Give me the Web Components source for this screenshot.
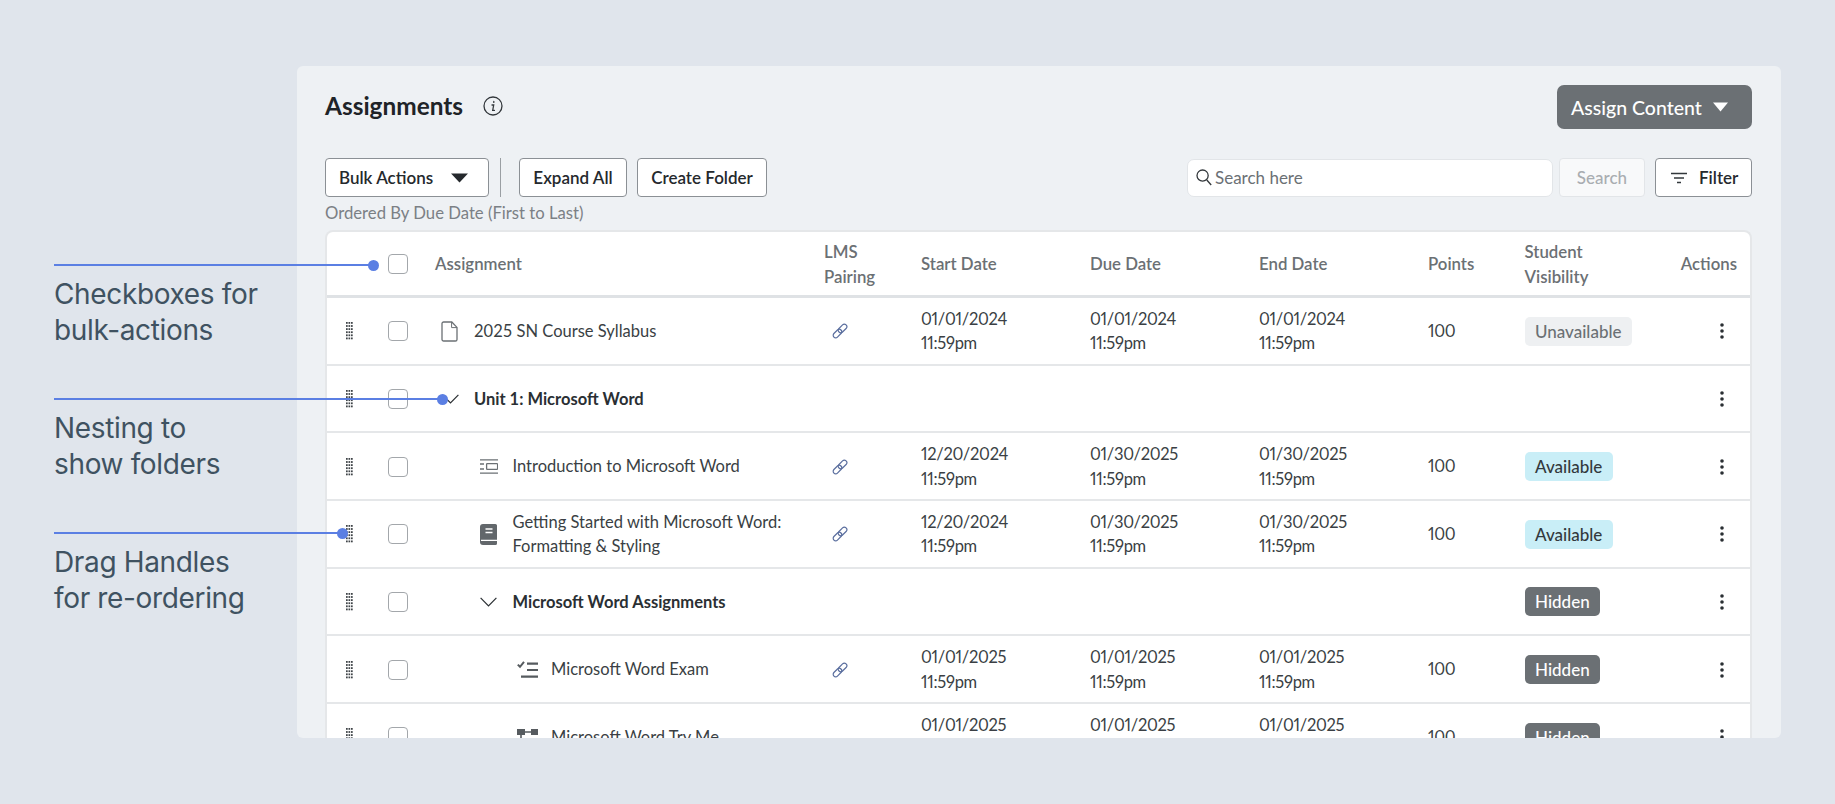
<!DOCTYPE html>
<html lang="en">
<head>
<meta charset="utf-8">
<title>Assignments</title>
<style>
html,body{margin:0;height:100%;background:#e0e5ec}
body{font-family:"Lato","Liberation Sans",sans-serif;overflow:hidden}
</style>
</head>
<body>
<assign-board></assign-board>
<script>
const COLS = '108px 389px 97px 169px 169px 169px 96.5px 1fr 90px';

const handleDots = () => {
  let out = '';
  for(let r=0;r<6;r++) for(let c=0;c<3;c++) out += `<rect x="${c*2.5}" y="${r*3.1}" width="1.7" height="1.8"/>`;
  return `<svg width="7" height="18" viewBox="0 0 7 18" fill="#3f4448">${out}</svg>`;
};

const ICONS = {
  doc:`<svg width="18" height="21" viewBox="0 0 18 21" fill="none" stroke="#6b7074" stroke-width="1.3"><path d="M2.6 1h8.2L16 6.4V18.4a1.6 1.6 0 0 1-1.6 1.6H2.6A1.6 1.6 0 0 1 1 18.4V2.6A1.6 1.6 0 0 1 2.6 1Z"/><path d="M10.6 1v5.6H16" stroke-width="1"/></svg>`,
  lesson:`<svg width="18" height="15" viewBox="0 0 18 15" fill="none" stroke="#6b7074" stroke-width="1.3"><path d="M0 .8h18M0 14.2h18M0 5h4M0 10h4"/><rect x="6.6" y="4.7" width="11" height="5.6" rx=".6"/></svg>`,
  book:`<svg width="18" height="21" viewBox="0 0 18 21"><path fill="#62676b" d="M3 0h12.4A1.6 1.6 0 0 1 17 1.6v17.8a1.6 1.6 0 0 1-1.6 1.6H3a3 3 0 0 1-3-3V3a3 3 0 0 1 3-3Z"/><path stroke="#fff" stroke-width="1.4" d="M5.5 5h7M5.5 8.5h7M1 16.4h16"/></svg>`,
  exam:`<svg width="21" height="17" viewBox="0 0 21 17" fill="none" stroke="#565b5f"><path stroke-width="2" d="M.8 3.6 3 5.8 7 .9"/><path stroke-width="2.2" d="M10 2.6h11M10 9h11M4 15.6h17"/></svg>`,
  tryme:`<svg width="21" height="17" viewBox="0 0 21 17" fill="#565b5f"><rect x="0" y="0" width="8" height="6"/><rect x="14" y="0" width="7" height="6"/><path stroke="#565b5f" stroke-width="1.6" fill="none" d="M8 3h6M4 6v8h5"/><rect x="9" y="11" width="8" height="6"/></svg>`,
  chevron:`<svg width="17" height="10" viewBox="0 0 17 10" fill="none" stroke="#2a2f33" stroke-width="1.2"><path d="M.6.8 8.5 9 16.4.8"/></svg>`,
  link:`<svg width="16" height="16" viewBox="0 0 16 16" fill="none" stroke="#5a6e9e" stroke-width="1.2"><g transform="rotate(-45 8 8)"><rect x="-.6" y="5.5" width="10" height="5" rx="2.5"/><rect x="6.6" y="5.5" width="10" height="5" rx="2.5"/></g></svg>`,
  kebab:`<svg width="4" height="16" viewBox="0 0 4 16" fill="#2a2f33"><circle cx="2" cy="2" r="1.8"/><circle cx="2" cy="8" r="1.8"/><circle cx="2" cy="14" r="1.8"/></svg>`,
  handle:handleDots()
};

class CalloutNote extends HTMLElement{
  constructor(){
    super();
    this.attachShadow({mode:'open'}).innerHTML = `
    <style>
    :host{display:block;position:relative;color:#3f5261;font:400 28px/36px "Inter","Noto Sans",sans-serif;letter-spacing:-.35px}
    .lead{position:absolute;left:0;top:-12px;height:2px;background:#5b7fe3;z-index:5}
    .lead::after{content:"";position:absolute;right:-5px;top:-4.5px;width:11px;height:11px;border-radius:50%;background:#5b7fe3}
    </style>
    <div class="lead" style="width:${this.getAttribute('reach')}px"></div><slot></slot>`;
  }
}

class UiButton extends HTMLElement{
  constructor(){
    super();
    this.attachShadow({mode:'open'}).innerHTML = `
    <style>
    :host{display:inline-flex;box-sizing:border-box;height:39px;align-items:center;justify-content:center;gap:10px;background:#fff;border:1px solid #8b9095;border-radius:4px;color:#25292d;font:600 17px "Lato",sans-serif;white-space:nowrap}
    :host([variant=primary]){height:44px;background:#6b7074;border:0;border-radius:7px;color:#fff;font-size:19.5px;font-weight:500;gap:11px;justify-content:flex-start;padding-left:14px}
    :host([variant=off]){background:#f8f9fa;border-color:#e2e5e8;color:#a9adb1;font-weight:500}
    </style>
    <slot></slot>`;
  }
}

class StatusTag extends HTMLElement{
  constructor(){
    super();
    this.attachShadow({mode:'open'}).innerHTML = `
    <style>
    :host{display:inline-flex;align-items:center;height:29px;padding:0 10.5px;border-radius:5px;font:500 17px "Lato",sans-serif;background:#eef0f2;color:#6b7074}
    :host([kind=available]){background:#c9eef7;color:#33393d}
    :host([kind=hidden]){background:#6b7074;color:#fff}
    </style>
    <slot></slot>`;
  }
}

class TableRow extends HTMLElement{
  constructor(){
    super();
    const level = +this.getAttribute('level') || 0;
    const icon = ICONS[this.getAttribute('icon')] || '';
    const folder = this.hasAttribute('folder');
    const dates = (this.getAttribute('dates') || '').split(',').filter(Boolean);
    const link = this.hasAttribute('link');
    const tag = this.getAttribute('tag');
    const tagLabel = tag ? tag[0].toUpperCase()+tag.slice(1) : '';
    this.attachShadow({mode:'open'}).innerHTML = `
    <style>
    :host{display:grid;grid-template-columns:${COLS};align-items:center;box-sizing:border-box;height:67.67px;padding-top:1px;border-bottom:2px solid #e5e7e9;color:#3a3f44;font:400 16.5px/24.5px "Lato",sans-serif}
    .tools{display:flex;align-items:center;padding-left:19px}
    .handle{display:flex;width:41.5px}
    .box{width:20px;height:20px;box-sizing:border-box;border:1.5px solid #a3a7ab;border-radius:4px;background:#fff}
    .name{display:flex;align-items:center;margin-left:${level*38.5}px}
    .glyph{display:flex;justify-content:center;align-items:center;width:30px;margin-right:9px}
    .folder{font-weight:700;color:#2a2f33}
    .lms{padding-left:8px;display:flex}
    .num{font-variant-numeric:proportional-nums;letter-spacing:-.3px}
    .end{display:flex;justify-content:flex-end;padding-right:26px}
    </style>
    <div class="tools"><span class="handle">${ICONS.handle}</span><span class="box"></span></div>
    <div class="name"><span class="glyph">${folder?ICONS.chevron:icon}</span><span class="${folder?'folder':''}"><slot></slot></span></div>
    <div class="lms">${link?ICONS.link:''}</div>
    ${[0,1,2].map(i=>`<div class="num">${dates[i]?dates[i].replace(' ','<br>'):''}</div>`).join('')}
    <div class="num">${dates.length?'100':''}</div>
    <div>${tag?`<status-tag kind="${tag}">${tagLabel}</status-tag>`:''}</div>
    <div class="end">${ICONS.kebab}</div>`;
  }
}

class TableHead extends HTMLElement{
  constructor(){
    super();
    this.attachShadow({mode:'open'}).innerHTML = `
    <style>
    :host{display:grid;grid-template-columns:${COLS};align-items:center;box-sizing:border-box;height:66px;border-bottom:3px solid #dfe2e5;color:#6b7074;font:600 16.8px/25px "Lato",sans-serif}
    .tools{padding-left:60.5px;display:flex}
    .box{width:20px;height:20px;box-sizing:border-box;border:1.5px solid #a3a7ab;border-radius:4px}
    .end{text-align:right;padding-right:13px}
    </style>
    <div class="tools"><span class="box"></span></div>
    <div>Assignment</div><div>LMS<br>Pairing</div><div>Start Date</div><div>Due Date</div><div>End Date</div><div>Points</div>
    <div>Student<br>Visibility</div><div class="end">Actions</div>`;
  }
}

class AssignBoard extends HTMLElement{
  constructor(){
    super();
    this.attachShadow({mode:'open'}).innerHTML = `
    <style>
    :host{display:flex;height:804px;box-sizing:border-box;padding:66px 54px 66px 54px}
    .notes{flex:0 0 243px;padding-top:210px;display:flex;flex-direction:column;gap:62px}
    .panel{flex:1;min-width:0;background:#eef1f4;border-radius:6px;padding:19px 29px 0 28px;display:flex;flex-direction:column;overflow:hidden;position:relative}
    .top{display:flex;justify-content:space-between;align-items:center;height:44px}
    h1{margin:0;display:flex;align-items:center;gap:20px;font:700 24.4px/40px "Lato",sans-serif;color:#1f2428;position:relative;top:-1px}
    .bar{display:flex;align-items:center;margin-top:29px;height:39px}
    .sep{width:1px;height:39px;background:#9a9fa3;margin:0 18px 0 11px}
    .search{width:366px;height:38px;box-sizing:border-box;background:#fff;border:1px solid #e2e5e8;border-radius:7px;display:flex;align-items:center;gap:3px;padding-left:8px;color:#6b7074;font:400 17px "Lato",sans-serif}
    .spring{flex:1}
    .order{margin-top:6px;height:20px;color:#7b8085;font:400 16.7px/20px "Lato",sans-serif}
    .table{margin-top:7px;background:#fff;border:2px solid #e5e7e9;border-bottom:0;border-radius:8px 8px 0 0;flex:1;overflow:hidden}
    </style>
    <div class="notes">
      <callout-note reach="320">Checkboxes for<br>bulk-actions</callout-note>
      <callout-note reach="389">Nesting to<br>show folders</callout-note>
      <callout-note reach="289">Drag Handles<br>for re-ordering</callout-note>
    </div>
    <section class="panel">
      <div class="top">
        <h1>Assignments <svg width="20" height="20" viewBox="0 0 20 20" fill="none" stroke="#33383c" stroke-width="1.3"><circle cx="10" cy="10" r="9"/><path d="M10.8 5.4v1M9 9h1.7l-1 5.4h1.7" stroke-linecap="round"/></svg></h1>
        <ui-button variant="primary" style="width:195px">Assign Content <svg width="15" height="10" viewBox="0 0 15 10" fill="#fff"><path d="M0 .5h15L7.5 9.5Z"/></svg></ui-button>
      </div>
      <div class="bar">
        <ui-button style="width:164px;gap:18px;justify-content:flex-start;padding-left:13px">Bulk Actions <svg width="17" height="10" viewBox="0 0 17 10" fill="#25292d"><path d="M0 .5h17L8.5 9.5Z"/></svg></ui-button>
        <span class="sep"></span>
        <ui-button style="width:108px">Expand All</ui-button>
        <ui-button style="width:130px;margin-left:10px">Create Folder</ui-button>
        <span class="spring"></span>
        <div class="search"><svg width="16" height="17" viewBox="0 0 16 17" fill="none" stroke="#33383c" stroke-width="1.3"><circle cx="6.6" cy="6.6" r="5.6"/><path d="m10.8 11 4.4 5"/></svg>Search here</div>
        <ui-button variant="off" style="width:86px;margin-left:6px">Search</ui-button>
        <ui-button style="width:97px;margin-left:10px;gap:12px;justify-content:flex-start;padding-left:15px"><svg width="16" height="12" viewBox="0 0 16 12" fill="none" stroke="#33383c" stroke-width="1.4"><path d="M0 1.5h16M3 6h10M6 10.5h4"/></svg>Filter</ui-button>
      </div>
      <div class="order">Ordered By Due Date (First to Last)</div>
      <div class="table">
        <table-head></table-head>
        <table-row icon="doc" link dates="01/01/2024 11:59pm,01/01/2024 11:59pm,01/01/2024 11:59pm" tag="unavailable">2025 SN Course Syllabus</table-row>
        <table-row folder>Unit 1: Microsoft Word</table-row>
        <table-row level="1" icon="lesson" link dates="12/20/2024 11:59pm,01/30/2025 11:59pm,01/30/2025 11:59pm" tag="available">Introduction to Microsoft Word</table-row>
        <table-row level="1" icon="book" link dates="12/20/2024 11:59pm,01/30/2025 11:59pm,01/30/2025 11:59pm" tag="available">Getting Started with Microsoft Word:<br>Formatting &amp; Styling</table-row>
        <table-row level="1" folder tag="hidden">Microsoft Word Assignments</table-row>
        <table-row level="2" icon="exam" link dates="01/01/2025 11:59pm,01/01/2025 11:59pm,01/01/2025 11:59pm" tag="hidden">Microsoft Word Exam</table-row>
        <table-row level="2" icon="tryme" dates="01/01/2025 11:59pm,01/01/2025 11:59pm,01/01/2025 11:59pm" tag="hidden">Microsoft Word Try Me</table-row>
      </div>
    </section>`;
  }
}

customElements.define('callout-note', CalloutNote);
customElements.define('ui-button', UiButton);
customElements.define('status-tag', StatusTag);
customElements.define('table-row', TableRow);
customElements.define('table-head', TableHead);
customElements.define('assign-board', AssignBoard);
</script>
</body>
</html>
